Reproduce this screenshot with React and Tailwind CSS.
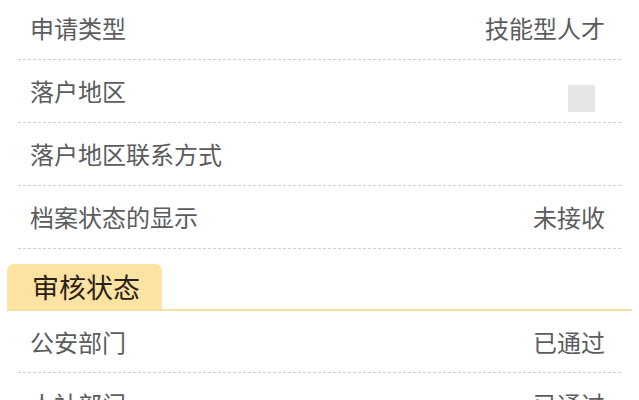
export default function App() {
  const font = { fontFamily: '"Noto Sans CJK SC", "Noto Sans", sans-serif' };
  const Row = ({ label, value, h = "h-[63px]", children }) => (
    <div className={`flex items-center justify-between ${h} mx-[18px] pl-[12px] pr-[16px] border-b border-dashed border-[#cfcfcf]`}>
      <span className="text-[24px] leading-none text-[#5c5c5c]">{label}</span>
      {value ? <span className="text-[24px] leading-none text-[#5c5c5c]">{value}</span> : children}
    </div>
  );
  return (
    <div className="w-[639px] h-[400px] bg-white overflow-hidden" style={font}>
      <div className="-mt-[3px]">
        <Row label="申请类型" value="技能型人才" />
        <Row label="落户地区">
          <div className="w-[27px] h-[27px] bg-[#e6e6e6] mr-[10px] mt-[14px]" />
        </Row>
        <Row label="落户地区联系方式" />
        <Row label="档案状态的显示" value="未接收" />
      </div>
      <div className="mt-[15px] ml-[7px] mr-[7px] border-b-2 border-[#f3dfa6]">
        <div className="w-[155px] h-[45px] bg-[#fde3a1] rounded-t-[7px] flex items-center pl-[25px]">
          <span className="text-[27px] leading-none text-[#2a2118]">审核状态</span>
        </div>
      </div>
      <Row label="公安部门" value="已通过" h="h-[62px]" />
      <Row label="人社部门" value="已通过" />
    </div>
  );
}
